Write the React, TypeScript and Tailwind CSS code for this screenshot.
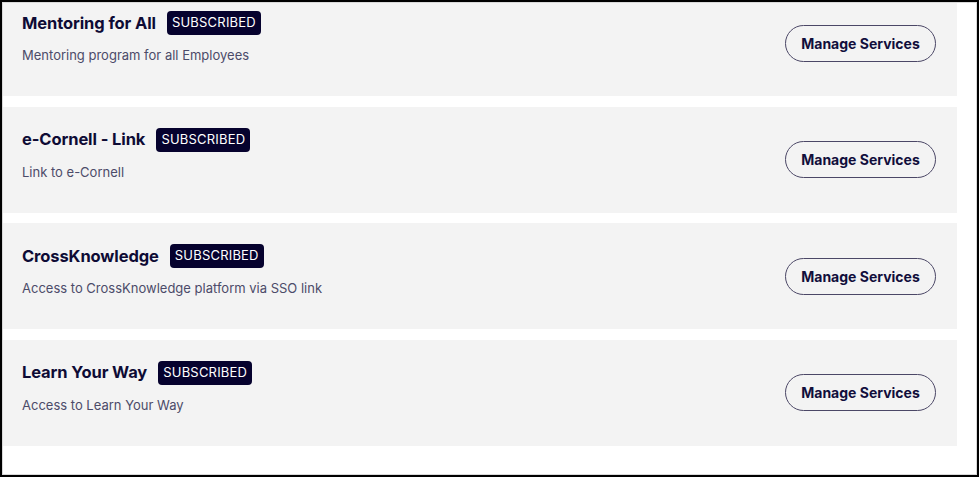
import React from 'react';

const services = [
  { name: 'Mentoring for All', description: 'Mentoring program for all Employees' },
  { name: 'e-Cornell - Link', description: 'Link to e-Cornell' },
  { name: 'CrossKnowledge', description: 'Access to CrossKnowledge platform via SSO link' },
  { name: 'Learn Your Way', description: 'Access to Learn Your Way' },
];

function ServiceCard({ name, description, first }: { name: string; description: string; first?: boolean }) {
  return (
    <div
      className={`flex h-[106px] shrink-0 items-center justify-between bg-[#f3f3f3] pl-[19px] pr-[21px] ${
        first ? 'mt-[-13px]' : ''
      }`}
    >
      <div className="flex flex-col self-start pt-[21px]">
        <div className="flex items-center gap-[11px]">
          <span className="text-[16.5px] font-bold leading-none tracking-[-0.1px] text-[#0e0b35]">{name}</span>
          <span className="flex h-[24px] w-[94px] items-center justify-center rounded-[4px] bg-[#06022e] text-[13px] font-normal tracking-[0.2px] text-white">
            SUBSCRIBED
          </span>
        </div>
        <p className="mt-[10px] text-[13px] leading-[20px] text-[#4c4b69]">{description}</p>
      </div>
      <button className="flex h-[37px] w-[151px] items-center justify-center rounded-full border border-[#4b4766] text-[14px] font-bold text-[#110e3b]">
        Manage Services
      </button>
    </div>
  );
}

export default function App() {
  return (
    <div
      className="h-[477px] w-[979px] overflow-hidden border-2 border-black bg-white"
      style={{ fontFamily: 'Inter, "Noto Sans", sans-serif' }}
    >
      <div className="flex h-full flex-col gap-[10.5px] overflow-hidden border border-[#d9d9d9] pr-[19px]">
        {services.map((s, i) => (
          <ServiceCard key={s.name} name={s.name} description={s.description} first={i === 0} />
        ))}
      </div>
    </div>
  );
}
